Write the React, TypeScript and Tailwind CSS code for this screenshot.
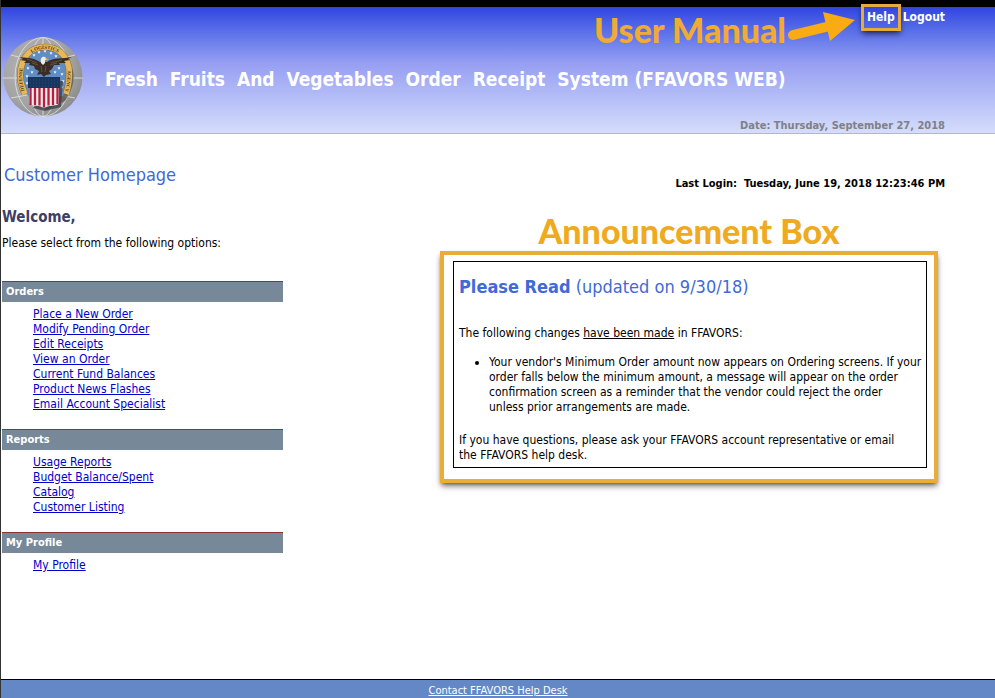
type Section = { title: string; links: string[] };

const sections: Section[] = [
  {
    title: "Orders",
    links: [
      "Place a New Order",
      "Modify Pending Order",
      "Edit Receipts",
      "View an Order",
      "Current Fund Balances",
      "Product News Flashes",
      "Email Account Specialist",
    ],
  },
  {
    title: "Reports",
    links: ["Usage Reports", "Budget Balance/Spent", "Catalog", "Customer Listing"],
  },
  { title: "My Profile", links: ["My Profile"] },
];

const stars = [
  [31, 18], [36, 15], [42, 14], [48, 16], [53, 19], [25, 31], [29, 35],
  [56, 31], [59, 37], [24, 39], [60, 44], [52, 35], [24, 46], [59, 50],
];

function Seal() {
  return (
    <svg viewBox="0 0 80 80" className="size-20 shrink-0" role="img" aria-label="Defense Logistics Agency seal">
      <defs>
        <radialGradient id="globe" cx="0.4" cy="0.4" r="0.65">
          <stop offset="0" stopColor="#b9b9b9" />
          <stop offset="0.7" stopColor="#a3a3a3" />
          <stop offset="1" stopColor="#8b8b8b" />
        </radialGradient>
        <path id="ring" d="M22 57C18 48 16 41 18 31C21 17 30 10 42 10C54 10 63 17 66 31C67 41 66 48 63 57" />
        <path id="lettering" d="M23 57C19 48 18 41 20 31C23 18 31 12 42 12C53 12 61 18 64 31C65 41 64 48 61 57" />
      </defs>
      <circle cx="40" cy="40" r="39.5" fill="url(#globe)" />
      <g fill="none" stroke="#dedede" strokeWidth="0.9">
        <path d="M40 0V80M0 41H80M8 18Q40 29 72 18M8 61Q40 53 72 61" />
        <ellipse cx="40" cy="40" rx="28" ry="39.5" />
        <ellipse cx="40" cy="40" rx="14" ry="39.5" />
      </g>
      <path d="M26 60C20 48 19 42 21 32C24 20 32 14 44 13C57 13 67 22 70 34C72 44 69 53 62 64L44 73Z" fill="#54534f" opacity="0.75" />
      <path d="M25 59C18 46 17 38 20 30C23 19 32 12 42 12C53 12 62 19 65 31C67 41 64 51 60 59Z" fill="#5f8dc4" />
      <use href="#ring" fill="none" stroke="#806a3b" strokeWidth="6.6" />
      <use href="#ring" fill="none" stroke="#e8b75a" strokeWidth="5.6" />
      <text fontSize="5" fontWeight="700" fontFamily="Liberation Serif, serif" fill="#4b3b20">
        <textPath href="#lettering" startOffset="3%">DEFENSE</textPath>
      </text>
      <text fontSize="5" fontWeight="700" fontFamily="Liberation Serif, serif" fill="#4b3b20">
        <textPath href="#lettering" startOffset="50%" textAnchor="middle">LOGISTICS</textPath>
      </text>
      <text fontSize="5" fontWeight="700" fontFamily="Liberation Serif, serif" fill="#4b3b20">
        <textPath href="#lettering" startOffset="98%" textAnchor="end">AGENCY</textPath>
      </text>
      {stars.map(([x, y]) => (
        <path
          key={`${x}-${y}`}
          transform={`translate(${x} ${y})`}
          d="M0-1.6L.5-.5L1.6-.4L.7.4L1 1.5L0 .9L-1 1.5L-.7.4L-1.6-.4L-.5-.5Z"
          fill="#eef4fb"
        />
      ))}
      {/* eagle */}
      <path
        d="M16 20C22 21 30 20 37 25L44 25C50 20 60 22 69 20L65 22L67 23L61 24L63 26L56 26L57 28L51 28L49 32L46 34L48 37L43 38L41 40L38 37L34 38L36 34L32 32L31 29L26 28L27 26L21 26L23 24L17 23L20 22Z"
        fill="#3b2d25"
      />
      <path d="M24 22L34 26M29 26L35 28M59 23L48 26M54 26L47 28M38 29L39 35M43 29L42 35" stroke="#75604b" strokeWidth="0.7" />
      <path d="M38 26C37 21 39 19 42 20L45 23L42 23L42 26L40 28Z" fill="#f1ede0" />
      <path d="M42 21L46 22L44 24Z" fill="#d9a53a" />
      {/* shield */}
      <path d="M30 71L42 74L58 70L60 44L54 44Z" fill="#3f4148" opacity="0.8" />
      <path d="M26 41H56V66C54 70 49 67 41 71C34 67 28 70 26 66Z" fill="#f2ecec" />
      <path
        d="M27.5 50V68M32 50V68M36.5 50V68.5M41 50V70.5M45.5 50V68.5M50 50V68M54.5 50V67"
        stroke="#b51f3d"
        strokeWidth="2.3"
      />
      <path d="M25 40H57V51H25Z" fill="#17355f" />
      <path d="M27 43H55M27 46H55M27 49H55" stroke="#345783" strokeWidth="0.8" strokeDasharray="1 2" />
    </svg>
  );
}

function Arrow() {
  return (
    <svg viewBox="0 0 68 32" className="h-8 w-17" aria-hidden="true">
      <path d="M5 25L38 17" stroke="#f9ac12" strokeWidth="10" strokeLinecap="round" />
      <path d="M35 2L67 10L42 31Z" fill="#f9ac12" />
    </svg>
  );
}

function Header() {
  return (
    <header className="relative flex h-[127px] items-center border-b border-[#b4b7c6] bg-linear-to-b from-[#3243e0] via-[#979ff2] via-45% to-[#d5ddfb] pl-[2px]">
      <div className="flex items-center gap-[22px] pt-[14px]">
        <Seal />
        <h1 className="pt-1 text-[19px] leading-6 font-bold whitespace-pre text-white">
          Fresh  Fruits  And  Vegetables  Order  Receipt  System (FFAVORS WEB)
        </h1>
      </div>
      <nav className="absolute top-0 right-[50px] flex items-start text-xs font-bold text-white">
        <a href="#help" className="-mt-[3px] border-3 border-[#e5ac3b] px-[3px] py-[3px] leading-[15px] shadow-md shadow-black/50">
          Help
        </a>
        <a href="#logout" className="py-[3px] pl-[2px] leading-[15px]">
          Logout
        </a>
      </nav>
      <div className="absolute top-[3px] right-[139px] flex items-start gap-[2px]">
        <span className="font-[Lato] text-[34px] leading-10 font-black text-[#f0aa35]">User Manual</span>
        <Arrow />
      </div>
      <p className="absolute right-[50px] bottom-0 text-[11px] leading-[15px] font-bold text-[#808089]">
        Date: Thursday, September 27, 2018
      </p>
    </header>
  );
}

function Menu({ title, links }: Section) {
  return (
    <section className="mb-[17px]">
      <h3 className="h-[21px] border-t border-[#8a3434] bg-[#778899] pl-1 text-[11px] leading-5 font-bold text-white">
        {title}
      </h3>
      <ul className="pt-[5px] pl-[31px]">
        {links.map((link) => (
          <li key={link}>
            <a href="#" className="text-[#0000c8] underline">
              {link}
            </a>
          </li>
        ))}
      </ul>
    </section>
  );
}

function Announcement() {
  return (
    <div className="mt-5 mr-[7px] w-[498px]">
      <p className="text-center font-[Lato] text-[34px] leading-10 font-black text-[#f0aa20]">Announcement Box</p>
      <div className="border-4 border-[#e8ae35] px-[9px] pt-[6px] pb-[11px] shadow-md shadow-black/50">
        <div className="-mr-[2px] border border-black px-[5px] pb-1">
          <h2 className="pt-[14px] text-lg leading-[22px] text-[#4169d8]">
            <strong>Please Read</strong> (updated on 9/30/18)
          </h2>
          <p className="mt-7">
            The following changes <u>have been made</u> in FFAVORS:
          </p>
          <ul className="my-[14px] list-disc pl-[30px]">
            <li>
              Your vendor's Minimum Order amount now appears on Ordering screens. If your
              <br />
              order falls below the minimum amount, a message will appear on the order
              <br />
              confirmation screen as a reminder that the vendor could reject the order
              <br />
              unless prior arrangements are made.
            </li>
          </ul>
          <p className="mt-[18px]">
            If you have questions, please ask your FFAVORS account representative or email
            <br />
            the FFAVORS help desk.
          </p>
        </div>
      </div>
    </div>
  );
}

export default function App() {
  return (
    <div className="flex min-h-screen flex-col border-l border-[#333] bg-white font-['DejaVu_Sans_Condensed','Noto_Sans',sans-serif] text-xs leading-[15px] text-black">
      <div className="h-[7px] bg-black" />
      <Header />
      <main className="flex flex-1 justify-between pr-[50px] pl-px">
        <div className="w-[281px] pt-[30px]">
          <h2 className="pl-[2px] text-lg leading-[22px] text-[#4169d8]">Customer Homepage</h2>
          <h2 className="mt-5 text-[15px] leading-[22px] font-bold text-[#3c4066]">Welcome,</h2>
          <p className="mt-2 mb-[30px]">Please select from the following options:</p>
          {sections.map((section) => (
            <Menu key={section.title} {...section} />
          ))}
        </div>
        <div className="flex flex-col items-end pt-[42px] whitespace-nowrap">
          <p className="text-[11px] font-bold whitespace-pre">Last Login:  Tuesday, June 19, 2018 12:23:46 PM</p>
          <Announcement />
        </div>
      </main>
      <footer className="h-[19px] border-t border-black bg-[#6488c6] pt-[3px] text-center text-[11px] leading-[15px] text-white">
        <a href="#contact" className="underline">
          Contact FFAVORS Help Desk
        </a>
      </footer>
    </div>
  );
}
